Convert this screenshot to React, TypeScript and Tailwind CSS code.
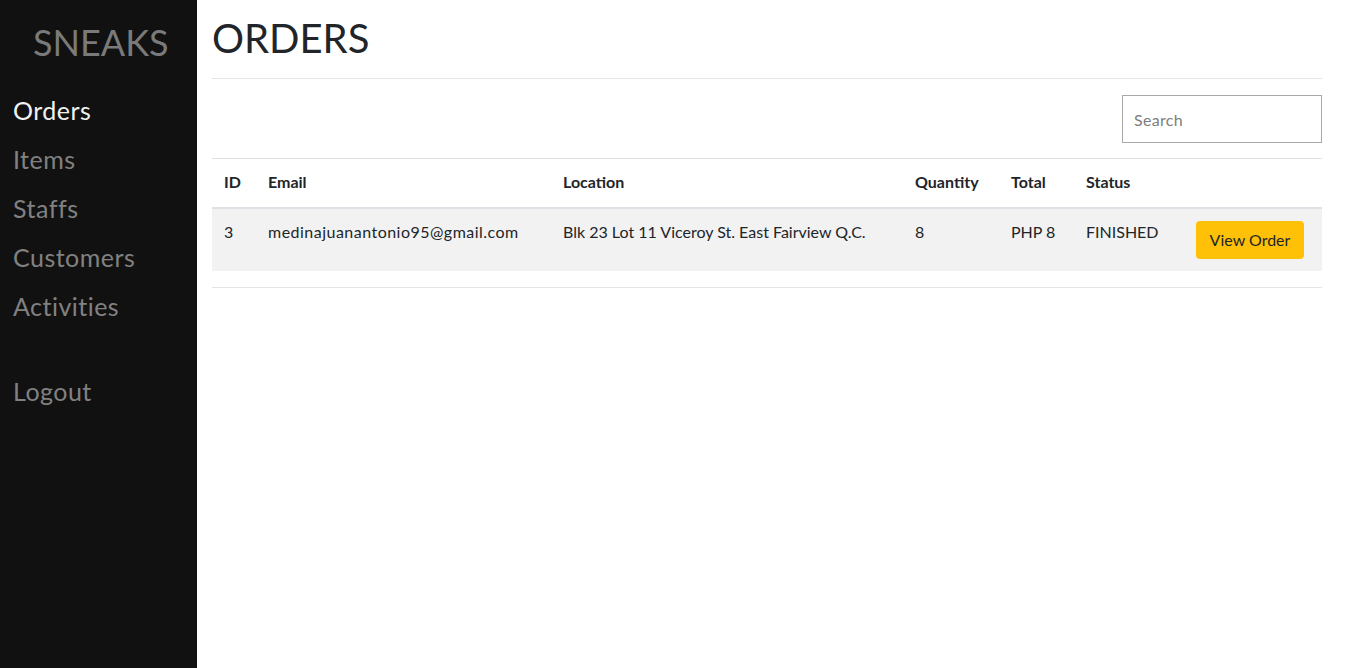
export default function App() {
  const nav = ["Orders", "Items", "Staffs", "Customers", "Activities"];
  return (
    <div
      className="flex min-h-[668px] bg-white text-[#212529]"
      style={{ fontFamily: "Lato, 'Noto Sans', sans-serif" }}
    >
      <aside className="w-[197px] shrink-0 bg-[#111111]">
        <div className="pt-[20px] pl-[33px] text-[36px] leading-[44px] text-[#7a7a7a]">SNEAKS</div>
        <nav className="mt-[22px] flex flex-col tracking-[0.03em]">
          {nav.map((n, i) => (
            <a
              key={n}
              href="#"
              className={`pl-[13px] text-[25px] leading-[49px] ${i === 0 ? "text-[#f1f1f1]" : "text-[#818181]"}`}
            >
              {n}
            </a>
          ))}
          <a href="#" className="mt-[36px] pl-[13px] text-[25px] leading-[49px] text-[#818181]">
            Logout
          </a>
        </nav>
      </aside>

      <main className="flex-1 px-[15px] pr-[23px]">
        <h1 className="pt-[14px] pb-[16px] text-[40px] leading-[48px] font-normal">ORDERS</h1>
        <hr className="border-t border-[#e5e5e5]" />
        <div className="flex justify-end pt-[16px] pb-[15px]">
          <input
            placeholder="Search"
            className="h-[48px] w-[200px] border border-[#a9a9a9] px-[11px] text-[16px] tracking-[0.02em] placeholder:text-[#7d7d7d] outline-none"
          />
        </div>
        <table className="w-full border-collapse text-[16px]">
          <thead>
            <tr className="border-t border-[#dee2e6] border-b-2 text-left">
              <th className="w-[44px] px-[12px] pt-[11px] pb-[13px] font-bold leading-[24px]">ID</th>
              <th className="w-[295px] px-[12px] pt-[11px] pb-[13px] font-bold leading-[24px]">Email</th>
              <th className="w-[352px] px-[12px] pt-[11px] pb-[13px] font-bold leading-[24px]">Location</th>
              <th className="w-[96px] px-[12px] pt-[11px] pb-[13px] font-bold leading-[24px]">Quantity</th>
              <th className="w-[75px] px-[12px] pt-[11px] pb-[13px] font-bold leading-[24px]">Total</th>
              <th className="w-[110px] px-[12px] pt-[11px] pb-[13px] font-bold leading-[24px]">Status</th>
              <th className="p-[12px]"></th>
            </tr>
          </thead>
          <tbody>
            <tr className="bg-[#f2f2f2] align-top leading-[24px]">
              <td className="px-[12px] pt-[11px] pb-[13px]">3</td>
              <td className="px-[12px] pt-[11px] pb-[13px] tracking-[0.03em]">medinajuanantonio95@gmail.com</td>
              <td className="px-[12px] pt-[11px] pb-[13px]">Blk 23 Lot 11 Viceroy St. East Fairview Q.C.</td>
              <td className="px-[12px] pt-[11px] pb-[13px]">8</td>
              <td className="px-[12px] pt-[11px] pb-[13px]">PHP 8</td>
              <td className="px-[12px] pt-[11px] pb-[13px]">FINISHED</td>
              <td className="p-[12px]">
                <button className="h-[38px] w-[108px] rounded-[4px] bg-[#ffc107] text-[16px] text-[#212529]">
                  View Order
                </button>
              </td>
            </tr>
          </tbody>
        </table>
        <hr className="mt-[16px] border-t border-[#e5e5e5]" />
      </main>
    </div>
  );
}
